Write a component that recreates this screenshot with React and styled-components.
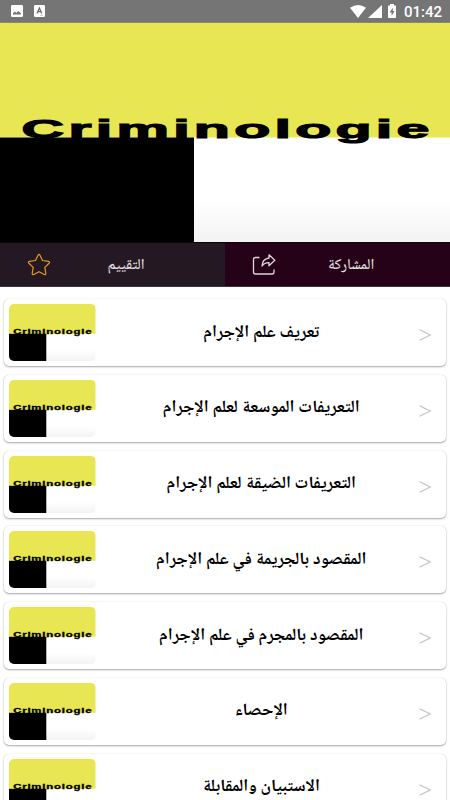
import React from "react";
import styled, { createGlobalStyle } from "styled-components";

const GlobalStyle = createGlobalStyle`
  * {
    box-sizing: border-box;
  }
  body {
    margin: 0;
    background: #fff;
    overflow: hidden;
  }
`;

const Screen = styled.div`
  width: 450px;
  height: 800px;
  overflow: hidden;
  display: flex;
  flex-direction: column;
  background: #fff;
  font-family: "Noto Naskh Arabic UI", "Noto Naskh Arabic", "DejaVu Sans",
    sans-serif;
`;

const StatusBar = styled.div`
  height: 23px;
  flex: none;
  display: flex;
  align-items: center;
  justify-content: space-between;
  padding: 0 8px 0 11px;
  background: #757575;
  border-bottom: 1px solid #8b8a68;
`;

const StatusGroup = styled.div`
  display: flex;
  align-items: center;
  gap: ${(props) => props.$gap};
  svg {
    display: block;
  }
`;

const Clock = styled.span`
  margin-left: 1px;
  padding-top: 1px;
  color: #fff;
  font-family: Roboto, sans-serif;
  font-size: 15px;
  font-weight: 500;
  line-height: 22px;
`;

const Banner = styled.div`
  height: 219px;
  flex: none;
`;

const Cover = styled.svg`
  display: block;
  width: 100%;
  height: 100%;
`;

const Actions = styled.div`
  height: 45px;
  flex: none;
  display: flex;
  border-top: 1px solid #0d0208;
  border-bottom: 1px solid #3a3539;
`;

const Action = styled.button`
  flex: 1;
  display: flex;
  align-items: center;
  padding: 0 0 0 27px;
  border: 0;
  background: ${(props) => props.$bg};
  color: #e6e0e4;
  font-family: inherit;
`;

const ActionLabel = styled.span`
  flex: 1;
  padding-right: 24px;
  font-size: 15px;
  font-weight: 500;
  line-height: 20px;
  text-align: center;
`;

const List = styled.div`
  flex: none;
  display: flex;
  flex-direction: column;
  gap: 8.8px;
  padding: 12px 4px 0;
`;

const Card = styled.div`
  height: 67px;
  flex: none;
  display: flex;
  align-items: center;
  padding: 0 14px 0 5px;
  border-radius: 5px;
  background: #fff;
  box-shadow: 0 1px 2px rgba(0, 0, 0, 0.34), 0 0 1px rgba(0, 0, 0, 0.16);
`;

const Thumb = styled.div`
  width: 86.5px;
  height: 57px;
  flex: none;
  border-radius: 5px;
  overflow: hidden;
`;

const Title = styled.div`
  flex: 1;
  padding-left: 9px;
  color: #000;
  font-size: 17.3px;
  font-weight: 700;
  line-height: 24px;
  text-align: center;
  white-space: nowrap;
`;

const Arrow = styled.svg`
  width: 14px;
  height: 14px;
  flex: none;
  margin-top: 5px;
`;

const CoverArt = () => (
  <Cover viewBox="0 0 450 219" preserveAspectRatio="none">
    <defs>
      <linearGradient id="paper" x1="0" y1="0" x2="0" y2="1">
        <stop offset="0.6" stopColor="#fff" />
        <stop offset="1" stopColor="#f3f3f3" />
      </linearGradient>
    </defs>
    <rect width="450" height="115" fill="#e9e654" />
    <rect y="114.5" width="450" height="104.5" fill="url(#paper)" />
    <rect y="114.5" width="194" height="104.5" fill="#000" />
    <text
      transform="translate(21.6 115) scale(2.27 1)"
      textLength="179.6"
      lengthAdjust="spacing"
      fontFamily="Liberation Sans"
      fontWeight="700"
      fontSize="26"
      stroke="#000"
      strokeWidth="1.1"
    >
      Criminologie
    </text>
  </Cover>
);

const topics = [
  "تعريف علم الإجرام",
  "التعريفات الموسعة لعلم الإجرام",
  "التعريفات الضيقة لعلم الإجرام",
  "المقصود بالجريمة في علم الإجرام",
  "المقصود بالمجرم في علم الإجرام",
  "الإحصاء",
  "الاستبيان والمقابلة",
];

const App = () => {
  return (
    <Screen>
      <GlobalStyle />
      <StatusBar>
        <StatusGroup $gap="11px">
          <svg width="12" height="12" viewBox="0 0 12 12">
            <rect width="12" height="12" rx="1.2" fill="#fff" />
            <path d="M2 9.5V8l2-1.5 1.3 1.4L7.5 6 10 8.5v1z" fill="#757575" />
          </svg>
          <svg width="11" height="12" viewBox="0 0 11 12">
            <rect width="11" height="12" rx="1.2" fill="#fff" />
            <path
              d="M3 8.4 5.4 3l2.4 5.4M3.9 6.7h3"
              fill="none"
              stroke="#666"
              strokeWidth="1.2"
            />
            <path d="M6 10.2h3" stroke="#aaa" strokeWidth="0.7" />
          </svg>
        </StatusGroup>
        <StatusGroup $gap="2px">
          <svg width="16" height="13" viewBox="0 0 16 13">
            <path d="M0 2.8Q8-2.6 16 2.8L8 13z" fill="#fff" />
          </svg>
          <svg width="14" height="13" viewBox="0 0 14 13">
            <path d="M14 0v13H0z" fill="#fff" />
          </svg>
          <svg width="17" height="14" viewBox="1 0 17 14">
            <path
              d="M7 0h4v1.5h1.3q.7 0 .7.7v11.1q0 .7-.7.7H5.7q-.7 0-.7-.7V2.2q0-.7.7-.7H7z"
              fill="#fff"
            />
            <path d="M9.8 3.7 6.6 8.4h2v3.4l3-4.9H9.8z" fill="#757575" />
          </svg>
          <Clock>01:42</Clock>
        </StatusGroup>
      </StatusBar>
      <Banner>
        <CoverArt />
      </Banner>
      <Actions>
        <Action $bg="#241923">
          <svg width="24" height="24" viewBox="0 0 24 24">
            <path
              d="M11 2.2q1-1.6 2 0l2.5 5.3 6 .9q1.8.5.6 1.8l-4.3 4.2 1 6q0 1.7-1.5 1.1L12 18.7l-5.3 2.8q-1.5.6-1.5-1.1l1-6-4.3-4.2Q.7 8.9 2.5 8.4l6-.9z"
              fill="none"
              stroke="#e8962a"
              strokeWidth="1.2"
              strokeLinejoin="round"
            />
          </svg>
          <ActionLabel>التقييم</ActionLabel>
        </Action>
        <Action $bg="#250218">
          <svg width="24" height="24" viewBox="0 0 24 24">
            <g
              fill="none"
              stroke="#ddd6da"
              strokeWidth="1.3"
              strokeLinejoin="round"
              strokeLinecap="round"
            >
              <path d="M7 4.5H3.5q-2 0-2 2v12.5q0 2 2 2h16.5q2 0 2-2V17" />
              <path d="M17 1.8 22.8 7.2 17 12.8V9.7q-4.5-.2-7 3.3.3-7 7-8z" />
            </g>
          </svg>
          <ActionLabel>المشاركة</ActionLabel>
        </Action>
      </Actions>
      <List>
        {topics.map((topic) => (
          <Card key={topic}>
            <Thumb>
              <CoverArt />
            </Thumb>
            <Title dir="rtl">{topic}</Title>
            <Arrow viewBox="0 0 14 14">
              <path
                d="M1.5 1.8 12.3 7 1.5 12.2"
                fill="none"
                stroke="#c4c4c4"
                strokeWidth="1.2"
              />
            </Arrow>
          </Card>
        ))}
      </List>
    </Screen>
  );
};

export default App;
